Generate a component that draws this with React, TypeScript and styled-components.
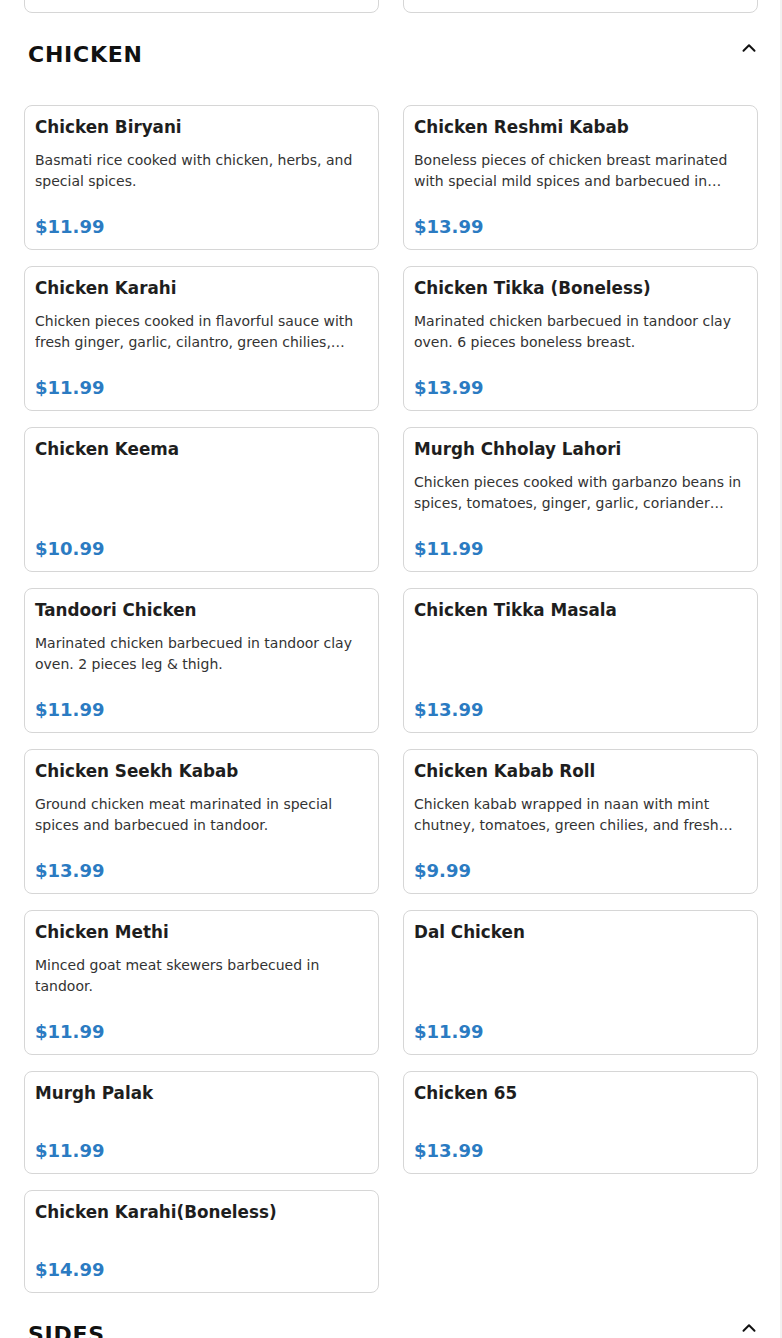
import React from "react";
import styled, { createGlobalStyle } from "styled-components";

const GlobalStyle = createGlobalStyle`
  html, body { margin: 0; padding: 0; background: #ffffff; }
  body { font-family: "DejaVu Sans", sans-serif; color: #1f1f1f; }
  * { box-sizing: border-box; }
`;

type Item = { name: string; desc?: string; price: string };

const prevItems: Item[] = [
  { name: "Goat Paya", desc: "Goat trotters slow cooked in a spicy stew with herbs and spices.", price: "$13.99" },
  { name: "Goat Nihari", desc: "Goat shank slow cooked in a rich gravy with ginger and spices.", price: "$14.99" },
];

const chicken: Item[] = [
  { name: "Chicken Biryani", desc: "Basmati rice cooked with chicken, herbs, and special spices.", price: "$11.99" },
  { name: "Chicken Reshmi Kabab", desc: "Boneless pieces of chicken breast marinated with special mild spices and barbecued in tandoor.", price: "$13.99" },
  { name: "Chicken Karahi", desc: "Chicken pieces cooked in flavorful sauce with fresh ginger, garlic, cilantro, green chilies,…", price: "$11.99" },
  { name: "Chicken Tikka (Boneless)", desc: "Marinated chicken barbecued in tandoor clay oven. 6 pieces boneless breast.", price: "$13.99" },
  { name: "Chicken Keema", price: "$10.99" },
  { name: "Murgh Chholay Lahori", desc: "Chicken pieces cooked with garbanzo beans in spices, tomatoes, ginger, garlic, coriander…", price: "$11.99" },
  { name: "Tandoori Chicken", desc: "Marinated chicken barbecued in tandoor clay oven. 2 pieces leg & thigh.", price: "$11.99" },
  { name: "Chicken Tikka Masala", price: "$13.99" },
  { name: "Chicken Seekh Kabab", desc: "Ground chicken meat marinated in special spices and barbecued in tandoor.", price: "$13.99" },
  { name: "Chicken Kabab Roll", desc: "Chicken kabab wrapped in naan with mint chutney, tomatoes, green chilies, and fresh onions.", price: "$9.99" },
  { name: "Chicken Methi", desc: "Minced goat meat skewers barbecued in tandoor.", price: "$11.99" },
  { name: "Dal Chicken", price: "$11.99" },
  { name: "Murgh Palak", price: "$11.99" },
  { name: "Chicken 65", price: "$13.99" },
  { name: "Chicken Karahi(Boneless)", price: "$14.99" },
];

const sides: Item[] = [
  { name: "Raita", desc: "Yogurt with cucumber and spices.", price: "$3.99" },
  { name: "Naan", price: "$2.49" },
];

const Page = styled.main`
  width: 782px;
  padding: 0 24px;
  margin-top: -132px;
`;

const EdgeStrip = styled.div`
  position: fixed;
  top: 0;
  right: 0;
  width: 2px;
  height: 100%;
  background: #f2f2f2;
`;

const Section = styled.section`
  display: flex;
  flex-direction: column;
`;

const SectionHeader = styled.header`
  display: flex;
  align-items: center;
  justify-content: space-between;
  padding: 28px 0 0 4px;
  margin-bottom: 38px;
  height: 26px;
  box-sizing: content-box;
`;

const SectionTitle = styled.h2`
  margin: 0;
  font-size: 22px;
  line-height: 26px;
  font-weight: 700;
  letter-spacing: 0.75px;
  color: #111;
  position: relative;
  top: 1px;
`;

const Toggle = styled.span`
  display: flex;
  width: 22px;
  height: 22px;
  margin-right: -2px;
  position: relative;
  top: -6px;
  color: #111;
`;

const Grid = styled.div`
  display: grid;
  grid-template-columns: 1fr 1fr;
  column-gap: 24px;
  row-gap: 16px;
`;

const Card = styled.article`
  display: flex;
  flex-direction: column;
  min-height: 103px;
  border: 1px solid #d6d6d6;
  border-radius: 8px;
  padding: 10px 10px;
  background: #fff;
`;

const ItemName = styled.h3`
  margin: 0 0 12px;
  font-size: 16.8px;
  line-height: 22px;
  font-weight: 700;
  color: #1e1e1e;
`;

const ItemDesc = styled.p`
  margin: 0 0 23px;
  font-size: 14px;
  line-height: 21px;
  color: #333;
  display: -webkit-box;
  -webkit-line-clamp: 2;
  -webkit-box-orient: vertical;
  overflow: hidden;
`;

const Price = styled.div`
  margin-top: auto;
  font-size: 18px;
  line-height: 24px;
  font-weight: 700;
  color: #2b7bc2;
`;

const Chevron = () => (
  <svg width="22" height="22" viewBox="0 0 24 24" fill="none" stroke="currentColor" strokeWidth="2.2" strokeLinecap="round" strokeLinejoin="round">
    <path d="m18 15-6-6-6 6" />
  </svg>
);

const MenuCard = ({ item }: { item: Item }) => (
  <Card>
    <ItemName>{item.name}</ItemName>
    <ItemDesc>{item.desc ?? ""}</ItemDesc>
    <Price>{item.price}</Price>
  </Card>
);

const MenuSection = ({ title, items }: { title: string; items: Item[] }) => (
  <Section>
    <SectionHeader>
      <SectionTitle>{title}</SectionTitle>
      <Toggle>
        <Chevron />
      </Toggle>
    </SectionHeader>
    <Grid>
      {items.map((it, i) => (
        <MenuCard key={i} item={it} />
      ))}
    </Grid>
  </Section>
);

export default function App() {
  return (
    <>
      <GlobalStyle />
      <Page>
        <Grid>
          {prevItems.map((it, i) => (
            <MenuCard key={i} item={it} />
          ))}
        </Grid>
        <MenuSection title="CHICKEN" items={chicken} />
        <MenuSection title="SIDES" items={sides} />
      </Page>
      <EdgeStrip />
    </>
  );
}
